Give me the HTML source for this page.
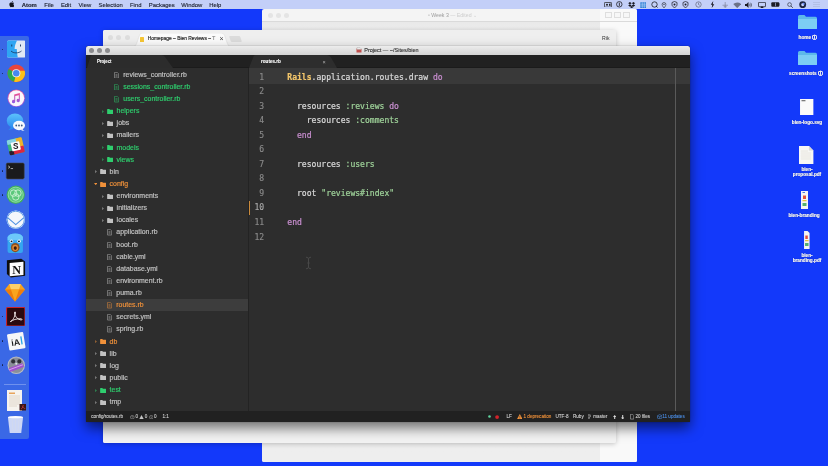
<!DOCTYPE html>
<html lang="en"><head><meta charset="utf-8"><title>Project — ~/Sites/bien</title>
<style>
*{margin:0;padding:0;box-sizing:border-box}
html,body{width:828px;height:466px;overflow:hidden;background:#1339fa}
body{font-family:"Liberation Sans",sans-serif;-webkit-font-smoothing:antialiased}
#desktop{filter:blur(.4px);position:relative;width:828px;height:466px;background:#1339fa;overflow:hidden}
/* menu bar */
#menubar{position:absolute;left:0;top:0;width:828px;height:9.300px;background:#c3cff8;}
#menubar span{-webkit-text-stroke:.12px #1a1e2c;position:absolute;top:.500px;height:9px;line-height:9.200px;font-size:5.900px;color:#1a1e2c;white-space:nowrap}
#menubar span.b{font-weight:bold}
#menubar svg{position:absolute}
/* dock */
#dock{position:absolute;left:0;top:36px;width:29px;height:402.500px;background:#3a68e6;border-radius:0 2px 2px 0}
#dock .d{position:absolute;left:1.500px;width:1.600px;height:1.600px;border-radius:50%;background:#16204a}
#dock svg{position:absolute}
#dock .sep{position:absolute;left:4px;width:22px;top:348px;height:.6px;background:#6f91ee}
/* desktop icons */
.dl{-webkit-text-stroke:.15px #fff;position:absolute;font-size:4.700px;font-weight:bold;color:#fff;white-space:nowrap;text-align:center;line-height:5.400px;text-shadow:0 .3px .8px rgba(0,0,0,.6)}
.di{position:absolute}
/* back window */
#w1{position:absolute;left:262px;top:9px;width:375px;height:453.200px;background:#f4f4f4;border-radius:2px 2px 2px 2px;overflow:hidden}
#w1 .tb{position:absolute;left:0;top:0;width:100%;height:12.500px;border-bottom:.5px solid #dadada}
#w1 .tb i,#w2 .strip i{position:absolute;top:3.500px;width:5px;height:5px;border-radius:50%;background:#e4e4e4}
#w1 .tb b{position:absolute;top:3px;width:7px;height:5.500px;border:.5px solid #dedede;background:#f7f7f7}
#w1 .t1{position:absolute;left:166px;top:3px;font-size:5.200px;color:#cdcdcd;white-space:nowrap}
#w1 .t1 em{font-style:normal;color:#9c9c9c}
#w1 .body{position:absolute;left:0;top:12.500px;width:100%;bottom:0;background:linear-gradient(#e9e9e9,#ededed 12px,#eeeeee)}
#w1 .insp{position:absolute;left:338px;top:0;right:0;bottom:0;background:#f9f9f9}
/* chrome window */
#w2{position:absolute;left:103px;top:30.300px;width:513px;height:412.500px;background:#f3f3f3;border-radius:2px;overflow:hidden;box-shadow:0 1px 5px rgba(0,0,0,.22)}
#w2 .strip{position:absolute;left:0;top:0;width:100%;height:16px;background:#efefef}
#w2 .strip i{top:5px;background:#dedede}
#w2 .tab{position:absolute;left:29.500px;top:2.500px;width:98px;height:13.500px}
#w2 .tab svg{position:absolute;left:0;top:0}
#w2 .tab em{position:absolute;left:7.200px;top:3.800px;width:4.200px;height:5px;background:#f6c634;border-radius:.6px}
#w2 .tab span{position:absolute;left:15.200px;top:3.700px;font-size:4.920px;color:#222;-webkit-text-stroke:.15px #222;white-space:nowrap}
#w2 .tab u{position:absolute;left:87px;top:2px;font-size:7px;color:#444;text-decoration:none}
#w2 .newtab{position:absolute;left:127px;top:6px;width:10.500px;height:6px;background:#dcdcdc;border-radius:1px;transform:skewX(18deg)}
#w2 .user{position:absolute;left:499px;top:4.800px;font-size:5.200px;color:#333}
#w2 .body{position:absolute;left:0;top:16px;width:100%;bottom:0;background:linear-gradient(#f5f5f5,#f3f3f3)}
/* atom */
#atom{position:absolute;left:86px;top:46.300px;width:603.500px;height:376.100px;border-radius:2.500px 2.500px 1px 1px;overflow:hidden;box-shadow:0 6px 13px rgba(0,0,0,.55),0 0 1px rgba(0,0,0,.6);background:#2d2d2d}
#atom .titlebar{position:absolute;left:0;top:0;width:100%;height:9px;background:linear-gradient(#ececec,#d4d4d4)}
#atom .titlebar i{position:absolute;top:1.700px;width:5.200px;height:5.200px;border-radius:50%;background:#8c8c8e}
#atom .title{position:absolute;left:270.300px;top:1.200px;font-size:5.480px;color:#2c2c2c;-webkit-text-stroke:.1px #2c2c2c;white-space:nowrap}
#atom .main{position:absolute;left:0;top:8.700px;width:100%;bottom:0;background:#2d2d2d}
#atom .tabbar{position:absolute;left:0;top:0;width:100%;height:13px;background:#212121;border-bottom:1.800px solid #1b1b1b}
.ptab,.ftab{position:absolute;left:1px;top:0}
.ptxt,.ftxt,.fx{-webkit-text-stroke:.1px #fff;position:absolute;color:#fff;font-weight:bold;font-size:4.900px;top:4.300px;white-space:nowrap;transform-origin:left center;transform:scaleX(.87)}
.ptxt{left:11.300px}
.ftxt{left:174.800px;font-size:4.900px;top:4.300px;transform:scaleX(.94)}
.fx{transform:none;left:236.500px;font-weight:normal;font-size:5.500px;top:3.600px;color:#b0b0b0;-webkit-text-stroke:0}
.tree{position:absolute;left:0;top:0;width:162px;height:100%}
.row{-webkit-text-stroke:.18px currentColor;position:absolute;left:0;width:162px;height:12.120px;font-size:6.950px;line-height:12.120px;white-space:nowrap}
.row.sel{background:#3d3d3d}
.row span{position:absolute;top:0}
.row .ic{position:absolute}
.vsep{position:absolute;left:162px;top:13px;width:.8px;bottom:11px;background:#232323}
.editor{position:absolute;left:163px;top:13px;right:0;bottom:11px;background:#2d2d2d;overflow:hidden}
.editor .hl{position:absolute;left:0;right:0;top:0;height:15.800px;background:#393939}
.editor .guide{position:absolute;left:426px;top:0;width:.9px;bottom:0;background:#5a5a5a}
.editor .curmark{position:absolute;left:0;top:132.800px;width:1px;height:14.500px;background:#c98a3c}
.ln,.cl{position:absolute;font-family:"DejaVu Sans Mono","Liberation Mono",monospace;font-size:8.070px;line-height:14.500px;height:14.500px;white-space:pre}
.ln{left:0;width:15.200px;-webkit-text-stroke:.15px currentColor;text-align:right;color:#8a8a8a;transform:translateY(-13px)}
.ln.cur{color:#a8a8a8}
.cl{left:38.300px;color:#dadada;-webkit-text-stroke:.2px currentColor;transform:translateY(-13px)}
.cl .y{color:#f3c66b;font-weight:bold}
.cl .p{color:#c98fd0}
.cl .g{color:#9fd39a}
.ibeam{position:absolute;left:55.500px;top:188.500px}
/* status */
#status{position:absolute;left:0;bottom:0;width:100%;height:11px;background:#212121}
#status span{-webkit-text-stroke:.1px currentColor;position:absolute;top:0;height:11px;line-height:11px;font-size:4.600px;color:#d0d0d0;white-space:nowrap}
#status svg{position:absolute}
#w2 .tab s{text-decoration:none;color:#c8c8c8}

</style></head>
<body>
<div id="desktop">
<div id="menubar">
<svg style="left:8.800px;top:1.400px" width="5.2" height="6.2" viewBox="0 0 17 20"><path d="M14.200 10.600c0-2.400 2-3.600 2.100-3.700-1.100-1.700-2.900-1.900-3.500-1.900-1.500-.2-2.900.9-3.700.9s-1.900-.9-3.200-.8C4.300 5.100 2.800 6 2 7.500.2 10.600 1.500 15.200 3.200 17.700c.9 1.200 1.900 2.600 3.200 2.500 1.300 0 1.800-.8 3.300-.8s2 .8 3.300.8c1.400 0 2.300-1.200 3.100-2.500.9-1.400 1.300-2.800 1.300-2.900 0 0-2.600-1-2.600-4.200zM11.700 3.200C12.400 2.400 12.800 1.200 12.700 0c-1 0-2.300.7-3 1.500-.7.800-1.200 2-1.100 3.100 1.200.1 2.400-.6 3.100-1.400z" fill="#14161f"/></svg>
<span class="b" style="left:21.800px">Atom</span>
<span style="left:44.300px">File</span>
<span style="left:60.900px">Edit</span>
<span style="left:78.500px">View</span>
<span style="left:98.500px">Selection</span>
<span style="left:130px">Find</span>
<span style="left:148.800px">Packages</span>
<span style="left:181.300px">Window</span>
<span style="left:209.200px">Help</span>
<!-- right status icons -->
<svg style="left:604px;top:1.800px" width="8" height="5.600" viewBox="0 0 16 11"><rect x=".8" y=".8" width="14.400" height="9.400" rx="1.500" fill="none" stroke="#222" stroke-width="1.500"/><circle cx="6" cy="5.500" r="2" fill="#222"/><path d="M10 4l3-1.500v6L10 7z" fill="#222"/></svg>
<svg style="left:616px;top:1.400px" width="6.600" height="6.600" viewBox="0 0 14 14"><circle cx="7" cy="7" r="5.800" fill="none" stroke="#1d1d25" stroke-width="1.700"/><rect x="6.100" y="3.500" width="1.800" height="7" fill="#1d1d25"/></svg>
<svg style="left:628.300px;top:1.500px" width="7.400" height="6.600" viewBox="0 0 16 14"><path d="M4.200 0L8 2.500 4.200 5 .4 2.500zM11.800 0l3.800 2.500L11.800 5 8 2.500zM.4 7.500L4.200 5 8 7.500 4.200 10zM11.800 5l3.800 2.500-3.800 2.500L8 7.500zM4.300 10.800L8 8.400l3.700 2.400L8 13.300z" fill="#1a1a22"/></svg>
<svg style="left:639.500px;top:1.600px" width="6.600" height="6.200" viewBox="0 0 13 12"><rect x=".5" y=".5" width="12" height="11" rx="1" fill="#2f7fd6"/><path d="M.5 4.200h12M.5 7.800h12M4.500 .5v11M8.500 .5v11" stroke="#d7ecff" stroke-width=".9"/></svg>
<svg style="left:650.500px;top:1.300px" width="7" height="7" viewBox="0 0 14 14"><circle cx="7" cy="7" r="5.400" fill="none" stroke="#1d1d25" stroke-width="1.600"/><path d="M10 10l3 3" stroke="#1d1d25" stroke-width="1.800"/></svg>
<svg style="left:661px;top:1.500px" width="6" height="6.600" viewBox="0 0 12 13"><path d="M6 1a3.800 3.800 0 0 1 3.800 3.800C9.800 7.500 6 12 6 12S2.200 7.500 2.200 4.800A3.800 3.800 0 0 1 6 1z" fill="none" stroke="#333842" stroke-width="1.400"/><circle cx="6" cy="4.800" r="1.300" fill="#333842"/></svg>
<svg style="left:670.500px;top:1.300px" width="7" height="7" viewBox="0 0 14 14"><path d="M7 1l5 2v4c0 3-2.200 5-5 6-2.800-1-5-3-5-6V3z" fill="none" stroke="#1d1d25" stroke-width="1.500"/><circle cx="7" cy="7" r="2" fill="#1d1d25"/></svg>
<svg style="left:681.500px;top:1.300px" width="7" height="7" viewBox="0 0 14 14"><path d="M7 1l5 2v4c0 3-2.200 5-5 6-2.800-1-5-3-5-6V3z" fill="none" stroke="#1d1d25" stroke-width="1.500"/><circle cx="7" cy="7" r="2" fill="#1d1d25"/></svg>
<svg style="left:694.500px;top:1.300px" width="7" height="7" viewBox="0 0 14 14"><circle cx="7" cy="7" r="5.400" fill="none" stroke="#5b6072" stroke-width="1.300"/><path d="M7 3.500V7l2.500 1.500" fill="none" stroke="#5b6072" stroke-width="1.300"/></svg>
<svg style="left:709.500px;top:1.200px" width="5" height="7.200" viewBox="0 0 10 14"><path d="M6.500 0L1.500 7.500h3L3.500 14l5-7.800h-3z" fill="#1d1d25"/></svg>
<svg style="left:721.500px;top:1.800px" width="6.400" height="6" viewBox="0 0 13 12"><path d="M6.500 0v12M1 6.500h11M3.500 9.500h6" stroke="#7a8096" stroke-width="1.400" fill="none"/></svg>
<svg style="left:732.500px;top:1.600px" width="8.400" height="6.400" viewBox="0 0 17 13"><path d="M8.500 12.500L.5 4.200a11.500 11.500 0 0 1 16 0z" fill="#6c7288"/></svg>
<svg style="left:744.500px;top:1.700px" width="7" height="6" viewBox="0 0 14 12"><path d="M0 4h3l4-4v12L3 8H0z" fill="#1d1d25"/><path d="M9 3.500a3.500 3.500 0 0 1 0 5M10.800 1.500a6 6 0 0 1 0 9" fill="none" stroke="#1d1d25" stroke-width="1.200"/></svg>
<svg style="left:757.500px;top:1.600px" width="8" height="6.400" viewBox="0 0 16 13"><rect x=".8" y=".8" width="14.400" height="8.800" rx="1" fill="none" stroke="#1d1d25" stroke-width="1.500"/><path d="M8 8l4 4.500H4z" fill="#1d1d25"/></svg>
<svg style="left:770.500px;top:2.200px" width="9.600" height="5" viewBox="0 0 19 10"><rect x=".5" y=".5" width="16" height="9" rx="1.800" fill="#1d1d25"/><rect x="17.300" y="3" width="1.500" height="4" fill="#1d1d25"/><rect x="8" y="1.500" width="1.200" height="7" fill="#c3cff8"/></svg>
<svg style="left:787px;top:1.600px" width="6.400" height="6.400" viewBox="0 0 13 13"><circle cx="5.200" cy="5.200" r="3.800" fill="none" stroke="#3a3f4e" stroke-width="1.500"/><path d="M8 8l4 4" stroke="#3a3f4e" stroke-width="1.700"/></svg>
<svg style="left:799.300px;top:1.100px" width="7.400" height="7.400" viewBox="0 0 15 15"><circle cx="7.500" cy="7.500" r="7" fill="#1e2440"/><circle cx="7.500" cy="7.500" r="3" fill="#c9d4ff"/><circle cx="9.500" cy="5.500" r="2" fill="#6a8cf5"/></svg>
<svg style="left:812.500px;top:2.200px" width="7" height="5" viewBox="0 0 14 10"><path d="M0 1h14M0 5h14M0 9h14" stroke="#aeb9de" stroke-width="1.400"/></svg>
</div>

<div id="dock">
<div class="d" style="top:12.5px"></div><div class="d" style="top:36.8px"></div><div class="d" style="top:134.0px"></div><div class="d" style="top:158.3px"></div><div class="d" style="top:279.8px"></div><div class="d" style="top:304.1px"></div><div class="d" style="top:328.4px"></div>
<!-- finder -->
<svg style="left:6.500px;top:4.3px" width="18.500" height="18" viewBox="0 0 37 36"><rect x="0" y="1" width="37" height="34" rx="3" fill="#dfe9f4"/><path d="M0 4a3 3 0 0 1 3-3h17c-3 6-4.500 11-4.800 17h4.300c.3 6 1 11 2 17H3a3 3 0 0 1-3-3z" fill="#2fa5f3"/><path d="M8 22c5 5 15 5 21 0" fill="none" stroke="#16345c" stroke-width="1.600"/><path d="M9.500 9v4M27 9v4" stroke="#16345c" stroke-width="1.800"/></svg>
<!-- chrome -->
<svg style="left:6.500px;top:28.3px" width="18.500" height="18.500" viewBox="0 0 36 36"><circle cx="18" cy="18" r="17" fill="#e8453c"/><path d="M18 18L3.300 9.500A17 17 0 0 0 14 34.500z" fill="#2ca94f"/><path d="M18 18l-4 16.500A17 17 0 0 0 34.300 13H18z" fill="#fbc116"/><circle cx="18" cy="18" r="8" fill="#f1f1f1"/><circle cx="18" cy="18" r="6.300" fill="#4688f1"/></svg>
<!-- itunes -->
<svg style="left:6.500px;top:52.7px" width="18.500" height="18.500" viewBox="0 0 36 36"><defs><linearGradient id="it" x1="0" y1="0" x2="0" y2="1"><stop offset="0" stop-color="#f2508c"/><stop offset="1" stop-color="#8d5de8"/></linearGradient></defs><circle cx="18" cy="18" r="17" fill="url(#it)"/><circle cx="18" cy="18" r="15.500" fill="#fbf7fb"/><path d="M14 10.500l11-2.500v14.500a3.200 3.200 0 1 1-2-3V12l-7 1.600v10.900a3.200 3.200 0 1 1-2-3z" fill="url(#it)"/></svg>
<!-- messages-ish -->
<svg style="left:6px;top:76.7px" width="19.500" height="19" viewBox="0 0 39 38"><defs><linearGradient id="ms" x1="0" y1="0" x2="0" y2="1"><stop offset="0" stop-color="#5cc2fb"/><stop offset="1" stop-color="#2b8cf0"/></linearGradient></defs><ellipse cx="18" cy="15.500" rx="16.500" ry="14.500" fill="url(#ms)"/><path d="M5 33c3-1 4-3 4.500-6l6 3c-3 3-7 4-10.500 3z" fill="#2b8cf0"/><ellipse cx="26" cy="25" rx="12" ry="9.500" fill="#f6f9fd"/><path d="M33 32c1 2 2.500 3 4.500 3.500-2.500.5-6 0-8-2z" fill="#f6f9fd"/><circle cx="20.500" cy="25" r="1.800" fill="#3d5c80"/><circle cx="26" cy="25" r="1.800" fill="#3d5c80"/><circle cx="31.500" cy="25" r="1.800" fill="#3d5c80"/></svg>
<!-- slack -->
<svg style="left:6px;top:101.2px" width="19.500" height="18.500" viewBox="0 0 38 36"><g transform="rotate(-13 19 18)"><rect x="4" y="3" width="30" height="30" rx="2.500" fill="#3ab57c"/><path d="M4 5.500A2.500 2.500 0 0 1 6.500 3H24v9H4z" fill="#86d3e4"/><path d="M22 3h9.500A2.500 2.500 0 0 1 34 5.500V22H24V12h-2z" fill="#f0b22c"/><path d="M34 20v10.500a2.500 2.500 0 0 1-2.500 2.500H12v-9h12v-4z" fill="#dc2740"/><path d="M4 25h9v8H6.500A2.500 2.500 0 0 1 4 30.500z" fill="#2a1c2c"/><rect x="10.500" y="9.500" width="17" height="17" rx="1.500" fill="#fbfbfb"/></g><text x="19" y="24.300" font-family="Liberation Sans,sans-serif" font-weight="bold" font-size="16" fill="#17141a" text-anchor="middle">S</text></svg>
<!-- terminal -->
<svg style="left:4.7px;top:125.8px" width="20.5" height="18" viewBox="0 0 39 37"><rect x="1" y="2" width="37" height="33" rx="3" fill="#1a1a1c" stroke="#4a4a50" stroke-width="1.200"/><path d="M5 8l3.500 2.500L5 13" fill="none" stroke="#e8e8e8" stroke-width="1.400"/><path d="M10 13.500h5" stroke="#e8e8e8" stroke-width="1.400"/></svg>
<!-- green round -->
<svg style="left:5.500px;top:149.4px" width="19.500" height="19.500" viewBox="0 0 36 36"><circle cx="18" cy="18" r="17" fill="#3fae5f"/><circle cx="18" cy="18" r="14" fill="#5cc87c"/><circle cx="18" cy="18" r="14" fill="none" stroke="#a9e6b8" stroke-width="1.300"/><circle cx="14" cy="15" r="6" fill="none" stroke="#d4f5db" stroke-width="1.500"/><circle cx="22" cy="15" r="6" fill="none" stroke="#d4f5db" stroke-width="1.500"/><circle cx="18" cy="22" r="6" fill="none" stroke="#d4f5db" stroke-width="1.500"/></svg>
<!-- airmail -->
<svg style="left:5.500px;top:173.6px" width="19.500" height="19.500" viewBox="0 0 36 36"><circle cx="18" cy="18" r="17" fill="#f4f7fb"/><circle cx="18" cy="18" r="15.800" fill="none" stroke="#5b9be6" stroke-width="1.800"/><path d="M3.500 14.500L18 27l14.500-12.500" fill="none" stroke="#4a8fe0" stroke-width="1.900"/></svg>
<!-- tweetbot -->
<svg style="left:6px;top:197.4px" width="18.5" height="20.5" viewBox="0 0 36 40"><path d="M3 8c2-5 8-7 15-7s13 2 15 7v27a4 4 0 0 1-4 4H7a4 4 0 0 1-4-4z" fill="#35a6f0"/><path d="M3 8c2-5 8-7 15-7s13 2 15 7v6H3z" fill="#6cc8fa"/><circle cx="10.500" cy="16" r="3.400" fill="#eef6fc"/><circle cx="25.500" cy="16" r="3.400" fill="#eef6fc"/><circle cx="10.800" cy="16.300" r="1.900" fill="#0e1c2c"/><circle cx="25.200" cy="16.300" r="1.900" fill="#0e1c2c"/><ellipse cx="18" cy="28.500" rx="8.500" ry="9" fill="#8a4f22"/><ellipse cx="18" cy="29" rx="5.800" ry="6.300" fill="#e08a35"/><ellipse cx="18" cy="29.500" rx="3" ry="3.500" fill="#3a1a08"/></svg>
<!-- notion -->
<svg style="left:4.500px;top:221.2px" width="22" height="21.500" viewBox="0 0 39 39"><path d="M3 6l26-3 7 5v26l-26 3-7-6z" fill="#0d0d0d"/><path d="M8 11l25-2.500v24L8 35z" fill="#fbfbfb"/><text x="20.500" y="30" font-family="Liberation Serif,serif" font-weight="bold" font-size="22" fill="#0d0d0d" text-anchor="middle">N</text></svg>
<!-- sketch -->
<svg style="left:4.2px;top:246.6px" width="22" height="19.5" viewBox="0 0 39 36"><path d="M9 2h21l8 10-18.500 22L1 12z" fill="#f7a11b"/><path d="M1 12h37L19.500 34z" fill="#ee7d0c"/><path d="M9 2l3 10h15l3-10z" fill="#fdd06a"/><path d="M12 12h15l-7.500 22z" fill="#f9a51e"/></svg>
<!-- acrobat -->
<svg style="left:5.7px;top:270.9px" width="19.5" height="19.5" viewBox="0 0 36 36"><rect x="1" y="1" width="34" height="34" rx="2" fill="#2a0a10" stroke="#c8232c" stroke-width="2"/><path d="M8 27c4-1 8-8 9.500-16 .5-3-2-3-1.800 0 .6 6 5 12 12 13 2.500.3 2.500-2 0-2.200C20 21 12 24 8 27z" fill="none" stroke="#f3e9ea" stroke-width="1.700"/></svg>
<!-- iA writer -->
<svg style="left:5.500px;top:294.7px" width="20.500" height="20.500" viewBox="0 0 40 40"><g transform="rotate(-9 20 20)"><rect x="4" y="4" width="32" height="32" rx="2" fill="#f7f7f7"/><text x="10" y="28" font-family="Liberation Sans,sans-serif" font-weight="bold" font-size="17" fill="#1b1b1b">iA</text><rect x="29" y="12" width="2.600" height="16" fill="#2aa7e8"/></g></svg>
<!-- reel -->
<svg style="left:6.500px;top:320.0px" width="18.500" height="18.500" viewBox="0 0 36 36"><circle cx="18" cy="18" r="17" fill="#b9bcc4"/><circle cx="18" cy="18" r="15" fill="#8b8f9a"/><circle cx="12" cy="10.500" r="4" fill="#2f3036"/><circle cx="24" cy="10.500" r="4" fill="#2f3036"/><circle cx="18" cy="15" r="2" fill="#dfe1e6"/><path d="M3 24L30 14l3 7L6 31z" fill="#a04fd0"/><path d="M4 27L31 17" stroke="#e7c6f5" stroke-width="1.400"/></svg>
<div class="sep"></div>
<!-- document -->
<svg style="left:6.500px;top:353.500px" width="19" height="23" viewBox="0 0 38 46"><rect x="0" y="0" width="30" height="42" fill="#f6f3ee"/><rect x="4" y="5" width="12" height="3" fill="#e7a45c"/><path d="M4 12h22M4 16h22M4 20h22M4 24h22M4 28h22M4 32h16" stroke="#d9cfc0" stroke-width="1.500"/><rect x="25" y="28" width="13" height="13" fill="#3a1418"/><path d="M28 38c2-.5 4-4 4.500-8M31 33c1 2 3 4 5.500 4" stroke="#e34a4a" stroke-width="1.300" fill="none"/></svg>
<!-- trash -->
<svg style="left:7px;top:379px" width="17" height="19.500" viewBox="0 0 37 40"><path d="M2 3h33l-4 35H6z" fill="#e6ebf8" opacity=".85"/><ellipse cx="18.500" cy="3.500" rx="16.500" ry="2.600" fill="#fbfcff"/><path d="M11 8l2 26M18.500 8v26M26 8l-2 26" stroke="#d5daea" stroke-width="1.200" fill="none"/></svg>
</div>

<!-- desktop icons -->
<svg class="di" style="left:798px;top:14.500px" width="19" height="14.500" viewBox="0 0 38 29"><path d="M0 3a3 3 0 0 1 3-3h10l3 3.500h19a3 3 0 0 1 3 3V26a3 3 0 0 1-3 3H3a3 3 0 0 1-3-3z" fill="#5db8ea"/><path d="M0 8h38v18a3 3 0 0 1-3 3H3a3 3 0 0 1-3-3z" fill="#7ccdf4"/></svg>
<div class="dl" style="left:788px;width:40px;top:34.6px">home ⓘ</div>
<svg class="di" style="left:798px;top:50.500px" width="19" height="14.500" viewBox="0 0 38 29"><path d="M0 3a3 3 0 0 1 3-3h10l3 3.500h19a3 3 0 0 1 3 3V26a3 3 0 0 1-3 3H3a3 3 0 0 1-3-3z" fill="#5db8ea"/><path d="M0 8h38v18a3 3 0 0 1-3 3H3a3 3 0 0 1-3-3z" fill="#7ccdf4"/></svg>
<div class="dl" style="left:784px;width:44px;top:70.9px">screenshots ⓘ</div>
<svg class="di" style="left:800.300px;top:98.500px" width="13.400" height="16.800" viewBox="0 0 27 34"><rect width="27" height="34" fill="#fafafa"/><rect x="3" y="2.500" width="8" height="2" fill="#555"/></svg>
<div class="dl" style="left:784px;width:46px;top:119.6px">bien-logo.svg</div>
<svg class="di" style="left:799.300px;top:145.500px" width="14.400" height="18" viewBox="0 0 29 36"><path d="M0 0h20l9 9v27H0z" fill="#f7f7f5"/><path d="M20 0v9h9z" fill="#d8d8d8"/><path d="M4 10h14M4 14h20M4 18h20M4 22h20M4 26h20" stroke="#e4e0d6" stroke-width="1.500"/></svg>
<div class="dl" style="left:784px;width:46px;top:166.9px">bien-<br>proposal.pdf</div>
<svg class="di" style="left:800.500px;top:191px" width="7" height="18" viewBox="0 0 14 36"><rect width="14" height="36" fill="#f4f4f4"/><rect x="3" y="2" width="5" height="2" fill="#4a7ad8"/><rect x="4" y="9" width="6" height="7" fill="#e0523c"/><rect x="3" y="18" width="8" height="2.500" fill="#e8c23a"/><rect x="3" y="24" width="8" height="6" fill="#55b070"/></svg>
<div class="dl" style="left:784px;width:46px;top:213.400px;left:781px">bien-branding</div>
<svg class="di" style="left:804.300px;top:231px" width="5.600" height="18" viewBox="0 0 11 36"><path d="M0 0h7l4 4v32H0z" fill="#f4f4f4"/><rect x="2.500" y="9" width="5" height="7" fill="#e0523c"/><rect x="2" y="18" width="7" height="2.500" fill="#e8c23a"/><rect x="2" y="24" width="7" height="6" fill="#55b070"/></svg>
<div class="dl" style="left:784px;width:46px;top:252.9px">bien-<br>branding.pdf</div>

<!-- back window (Sketch) -->
<div id="w1">
  <div class="body"></div><div class="insp"></div>
  <div class="tb"><i style="left:5.500px"></i><i style="left:13.500px"></i><i style="left:21.500px"></i>
    <span class="t1"><em>▫ Week 3</em> — Edited ⌄</span>
    <b style="left:343px"></b><b style="left:352px"></b><b style="left:361px"></b>
  </div>
</div>
<!-- chrome window -->
<div id="w2">
  <div class="strip"><i style="left:4.500px"></i><i style="left:13px"></i><i style="left:21.500px"></i>
    <div class="tab"><svg width="98" height="13.5" viewBox="0 0 98 13.5"><path d="M0 13.5C3 13.5 3.500 11 5 6.500 6.500 2 7 0 10 0H88C91 0 91.500 2 93 6.500 94.500 11 95 13.500 98 13.500z" fill="#fbfbfb" stroke="#d9d9d9" stroke-width=".5"/></svg><em></em><span>Homepage – Bien Reviews – <s>T</s></span><u>×</u></div>
    <div class="newtab"></div>
    <div class="user">Rik</div>
  </div>
  <div class="body"></div>
</div>
<!-- atom window -->
<div id="atom">
  <div class="titlebar"><i style="left:2.500px"></i><i style="left:10.500px"></i><i style="left:18.500px"></i>
    <span class="title"><svg width="6" height="6" viewBox="0 0 12 12" style="vertical-align:-1px;margin-right:2px"><path d="M1 3h4l1 1h5v7H1z" fill="#c0504d"/><path d="M2 1h6l2 2v2H2z" fill="#e8e8e8" stroke="#999" stroke-width=".6"/></svg>Project — ~/Sites/bien</span>
  </div>
  <div class="main">
    <div class="tabbar"></div>
    <svg class="ptab" width="92" height="13" viewBox="0 0 92 13"><path d="M0 13L3.500 1.500Q4 0 5.500 0H75Q77 0 78.500 2.500L86 13z" fill="#2c2c2c"/></svg>
    <span class="ptxt">Project</span>
    <svg class="ftab" width="92" height="13" viewBox="0 0 92 13" style="left:163px"><path d="M0 13L4.500 1.500Q5 0 6.500 0H78Q80.500 0 82 2.500L88 13z" fill="#2d2d2d"/></svg>
    <span class="ftxt">routes.rb</span><span class="fx">×</span>
    <div class="tree">
<div class="row" style="top:13.90px;color:#c2c2c2"><svg class="ic" style="left:28.3px;top:3px" width="5" height="6.4" viewBox="0 0 10 13" opacity=".65"><path d="M1 .7h5.5L9.3 3.6v8.7H1z" fill="none" stroke="#c2c2c2" stroke-width="1.5"/><path d="M3 5h4M3 7.3h4M3 9.6h4" stroke="#c2c2c2" stroke-width="1.2"/></svg><span style="left:37.3px">reviews_controller.rb</span></div>
<div class="row" style="top:26.02px;color:#2fce6e"><svg class="ic" style="left:28.3px;top:3px" width="5" height="6.4" viewBox="0 0 10 13" opacity=".65"><path d="M1 .7h5.5L9.3 3.6v8.7H1z" fill="none" stroke="#2fce6e" stroke-width="1.5"/><path d="M3 5h4M3 7.3h4M3 9.6h4" stroke="#2fce6e" stroke-width="1.2"/></svg><span style="left:37.3px">sessions_controller.rb</span></div>
<div class="row" style="top:38.14px;color:#2fce6e"><svg class="ic" style="left:28.3px;top:3px" width="5" height="6.4" viewBox="0 0 10 13" opacity=".65"><path d="M1 .7h5.5L9.3 3.6v8.7H1z" fill="none" stroke="#2fce6e" stroke-width="1.5"/><path d="M3 5h4M3 7.3h4M3 9.6h4" stroke="#2fce6e" stroke-width="1.2"/></svg><span style="left:37.3px">users_controller.rb</span></div>
<div class="row" style="top:50.26px;color:#2fce6e"><svg class="ic" style="left:15.8px;top:4.6px" width="2" height="3.2" viewBox="0 0 5 8"><path d="M0 0v8L5 4z" fill="#2fce6e" opacity=".5"/></svg><svg class="ic" style="left:21.3px;top:3.6px" width="6.2" height="5" viewBox="0 0 13 11"><path d="M0 1.2C0 .5.5 0 1.2 0h3.6l1.3 1.6h5.7c.7 0 1.2.5 1.2 1.2v7c0 .7-.5 1.2-1.2 1.2H1.200C.5 11 0 10.500 0 9.800z" fill="#2fce6e"/></svg><span style="left:30.6px">helpers</span></div>
<div class="row" style="top:62.38px;color:#c2c2c2"><svg class="ic" style="left:15.8px;top:4.6px" width="2" height="3.2" viewBox="0 0 5 8"><path d="M0 0v8L5 4z" fill="#c2c2c2" opacity=".5"/></svg><svg class="ic" style="left:21.3px;top:3.6px" width="6.2" height="5" viewBox="0 0 13 11"><path d="M0 1.2C0 .5.5 0 1.2 0h3.6l1.3 1.6h5.7c.7 0 1.2.5 1.2 1.2v7c0 .7-.5 1.2-1.2 1.2H1.200C.5 11 0 10.500 0 9.800z" fill="#c2c2c2"/></svg><span style="left:30.6px">jobs</span></div>
<div class="row" style="top:74.50px;color:#c2c2c2"><svg class="ic" style="left:15.8px;top:4.6px" width="2" height="3.2" viewBox="0 0 5 8"><path d="M0 0v8L5 4z" fill="#c2c2c2" opacity=".5"/></svg><svg class="ic" style="left:21.3px;top:3.6px" width="6.2" height="5" viewBox="0 0 13 11"><path d="M0 1.2C0 .5.5 0 1.2 0h3.6l1.3 1.6h5.7c.7 0 1.2.5 1.2 1.2v7c0 .7-.5 1.2-1.2 1.2H1.200C.5 11 0 10.500 0 9.800z" fill="#c2c2c2"/></svg><span style="left:30.6px">mailers</span></div>
<div class="row" style="top:86.62px;color:#2fce6e"><svg class="ic" style="left:15.8px;top:4.6px" width="2" height="3.2" viewBox="0 0 5 8"><path d="M0 0v8L5 4z" fill="#2fce6e" opacity=".5"/></svg><svg class="ic" style="left:21.3px;top:3.6px" width="6.2" height="5" viewBox="0 0 13 11"><path d="M0 1.2C0 .5.5 0 1.2 0h3.6l1.3 1.6h5.7c.7 0 1.2.5 1.2 1.2v7c0 .7-.5 1.2-1.2 1.2H1.200C.5 11 0 10.500 0 9.800z" fill="#2fce6e"/></svg><span style="left:30.6px">models</span></div>
<div class="row" style="top:98.74px;color:#2fce6e"><svg class="ic" style="left:15.8px;top:4.6px" width="2" height="3.2" viewBox="0 0 5 8"><path d="M0 0v8L5 4z" fill="#2fce6e" opacity=".5"/></svg><svg class="ic" style="left:21.3px;top:3.6px" width="6.2" height="5" viewBox="0 0 13 11"><path d="M0 1.2C0 .5.5 0 1.2 0h3.6l1.3 1.6h5.7c.7 0 1.2.5 1.2 1.2v7c0 .7-.5 1.2-1.2 1.2H1.200C.5 11 0 10.500 0 9.800z" fill="#2fce6e"/></svg><span style="left:30.6px">views</span></div>
<div class="row" style="top:110.86px;color:#c2c2c2"><svg class="ic" style="left:8.8px;top:4.6px" width="2" height="3.2" viewBox="0 0 5 8"><path d="M0 0v8L5 4z" fill="#c2c2c2" opacity=".5"/></svg><svg class="ic" style="left:14.3px;top:3.6px" width="6.2" height="5" viewBox="0 0 13 11"><path d="M0 1.2C0 .5.5 0 1.2 0h3.6l1.3 1.6h5.7c.7 0 1.2.5 1.2 1.2v7c0 .7-.5 1.2-1.2 1.2H1.200C.5 11 0 10.500 0 9.800z" fill="#c2c2c2"/></svg><span style="left:23.6px">bin</span></div>
<div class="row" style="top:122.98px;color:#f0913a"><svg class="ic" style="left:7.7px;top:5.2px" width="3.4" height="2.2" viewBox="0 0 8 5"><path d="M0 0h8L4 5z" fill="#f0913a"/></svg><svg class="ic" style="left:14.3px;top:3.6px" width="6.2" height="5" viewBox="0 0 13 11"><path d="M0 1.2C0 .5.5 0 1.2 0h3.6l1.3 1.6h5.7c.7 0 1.2.5 1.2 1.2v7c0 .7-.5 1.2-1.2 1.2H1.200C.5 11 0 10.500 0 9.800z" fill="#f0913a"/></svg><span style="left:23.6px">config</span></div>
<div class="row" style="top:135.10px;color:#c2c2c2"><svg class="ic" style="left:15.8px;top:4.6px" width="2" height="3.2" viewBox="0 0 5 8"><path d="M0 0v8L5 4z" fill="#c2c2c2" opacity=".5"/></svg><svg class="ic" style="left:21.3px;top:3.6px" width="6.2" height="5" viewBox="0 0 13 11"><path d="M0 1.2C0 .5.5 0 1.2 0h3.6l1.3 1.6h5.7c.7 0 1.2.5 1.2 1.2v7c0 .7-.5 1.2-1.2 1.2H1.200C.5 11 0 10.500 0 9.800z" fill="#c2c2c2"/></svg><span style="left:30.6px">environments</span></div>
<div class="row" style="top:147.22px;color:#c2c2c2"><svg class="ic" style="left:15.8px;top:4.6px" width="2" height="3.2" viewBox="0 0 5 8"><path d="M0 0v8L5 4z" fill="#c2c2c2" opacity=".5"/></svg><svg class="ic" style="left:21.3px;top:3.6px" width="6.2" height="5" viewBox="0 0 13 11"><path d="M0 1.2C0 .5.5 0 1.2 0h3.6l1.3 1.6h5.7c.7 0 1.2.5 1.2 1.2v7c0 .7-.5 1.2-1.2 1.2H1.200C.5 11 0 10.500 0 9.800z" fill="#c2c2c2"/></svg><span style="left:30.6px">initializers</span></div>
<div class="row" style="top:159.34px;color:#c2c2c2"><svg class="ic" style="left:15.8px;top:4.6px" width="2" height="3.2" viewBox="0 0 5 8"><path d="M0 0v8L5 4z" fill="#c2c2c2" opacity=".5"/></svg><svg class="ic" style="left:21.3px;top:3.6px" width="6.2" height="5" viewBox="0 0 13 11"><path d="M0 1.2C0 .5.5 0 1.2 0h3.6l1.3 1.6h5.7c.7 0 1.2.5 1.2 1.2v7c0 .7-.5 1.2-1.2 1.2H1.200C.5 11 0 10.500 0 9.800z" fill="#c2c2c2"/></svg><span style="left:30.6px">locales</span></div>
<div class="row" style="top:171.46px;color:#c2c2c2"><svg class="ic" style="left:21.3px;top:3px" width="5" height="6.4" viewBox="0 0 10 13" opacity=".65"><path d="M1 .7h5.5L9.3 3.6v8.7H1z" fill="none" stroke="#c2c2c2" stroke-width="1.5"/><path d="M3 5h4M3 7.3h4M3 9.6h4" stroke="#c2c2c2" stroke-width="1.2"/></svg><span style="left:30.3px">application.rb</span></div>
<div class="row" style="top:183.58px;color:#c2c2c2"><svg class="ic" style="left:21.3px;top:3px" width="5" height="6.4" viewBox="0 0 10 13" opacity=".65"><path d="M1 .7h5.5L9.3 3.6v8.7H1z" fill="none" stroke="#c2c2c2" stroke-width="1.5"/><path d="M3 5h4M3 7.3h4M3 9.6h4" stroke="#c2c2c2" stroke-width="1.2"/></svg><span style="left:30.3px">boot.rb</span></div>
<div class="row" style="top:195.70px;color:#c2c2c2"><svg class="ic" style="left:21.3px;top:3px" width="5" height="6.4" viewBox="0 0 10 13" opacity=".65"><path d="M1 .7h5.5L9.3 3.6v8.7H1z" fill="none" stroke="#c2c2c2" stroke-width="1.5"/><path d="M3 5h4M3 7.3h4M3 9.6h4" stroke="#c2c2c2" stroke-width="1.2"/></svg><span style="left:30.3px">cable.yml</span></div>
<div class="row" style="top:207.82px;color:#c2c2c2"><svg class="ic" style="left:21.3px;top:3px" width="5" height="6.4" viewBox="0 0 10 13" opacity=".65"><path d="M1 .7h5.5L9.3 3.6v8.7H1z" fill="none" stroke="#c2c2c2" stroke-width="1.5"/><path d="M3 5h4M3 7.3h4M3 9.6h4" stroke="#c2c2c2" stroke-width="1.2"/></svg><span style="left:30.3px">database.yml</span></div>
<div class="row" style="top:219.94px;color:#c2c2c2"><svg class="ic" style="left:21.3px;top:3px" width="5" height="6.4" viewBox="0 0 10 13" opacity=".65"><path d="M1 .7h5.5L9.3 3.6v8.7H1z" fill="none" stroke="#c2c2c2" stroke-width="1.5"/><path d="M3 5h4M3 7.3h4M3 9.6h4" stroke="#c2c2c2" stroke-width="1.2"/></svg><span style="left:30.3px">environment.rb</span></div>
<div class="row" style="top:232.06px;color:#c2c2c2"><svg class="ic" style="left:21.3px;top:3px" width="5" height="6.4" viewBox="0 0 10 13" opacity=".65"><path d="M1 .7h5.5L9.3 3.6v8.7H1z" fill="none" stroke="#c2c2c2" stroke-width="1.5"/><path d="M3 5h4M3 7.3h4M3 9.6h4" stroke="#c2c2c2" stroke-width="1.2"/></svg><span style="left:30.3px">puma.rb</span></div>
<div class="row sel" style="top:244.18px;color:#f0913a"><svg class="ic" style="left:21.3px;top:3px" width="5" height="6.4" viewBox="0 0 10 13" opacity=".65"><path d="M1 .7h5.5L9.3 3.6v8.7H1z" fill="none" stroke="#f0913a" stroke-width="1.5"/><path d="M3 5h4M3 7.3h4M3 9.6h4" stroke="#f0913a" stroke-width="1.2"/></svg><span style="left:30.3px">routes.rb</span></div>
<div class="row" style="top:256.30px;color:#c2c2c2"><svg class="ic" style="left:21.3px;top:3px" width="5" height="6.4" viewBox="0 0 10 13" opacity=".65"><path d="M1 .7h5.5L9.3 3.6v8.7H1z" fill="none" stroke="#c2c2c2" stroke-width="1.5"/><path d="M3 5h4M3 7.3h4M3 9.6h4" stroke="#c2c2c2" stroke-width="1.2"/></svg><span style="left:30.3px">secrets.yml</span></div>
<div class="row" style="top:268.42px;color:#c2c2c2"><svg class="ic" style="left:21.3px;top:3px" width="5" height="6.4" viewBox="0 0 10 13" opacity=".65"><path d="M1 .7h5.5L9.3 3.6v8.7H1z" fill="none" stroke="#c2c2c2" stroke-width="1.5"/><path d="M3 5h4M3 7.3h4M3 9.6h4" stroke="#c2c2c2" stroke-width="1.2"/></svg><span style="left:30.3px">spring.rb</span></div>
<div class="row" style="top:280.54px;color:#f0913a"><svg class="ic" style="left:8.8px;top:4.6px" width="2" height="3.2" viewBox="0 0 5 8"><path d="M0 0v8L5 4z" fill="#f0913a" opacity=".5"/></svg><svg class="ic" style="left:14.3px;top:3.6px" width="6.2" height="5" viewBox="0 0 13 11"><path d="M0 1.2C0 .5.5 0 1.2 0h3.6l1.3 1.6h5.7c.7 0 1.2.5 1.2 1.2v7c0 .7-.5 1.2-1.2 1.2H1.200C.5 11 0 10.500 0 9.800z" fill="#f0913a"/></svg><span style="left:23.6px">db</span></div>
<div class="row" style="top:292.66px;color:#c2c2c2"><svg class="ic" style="left:8.8px;top:4.6px" width="2" height="3.2" viewBox="0 0 5 8"><path d="M0 0v8L5 4z" fill="#c2c2c2" opacity=".5"/></svg><svg class="ic" style="left:14.3px;top:3.6px" width="6.2" height="5" viewBox="0 0 13 11"><path d="M0 1.2C0 .5.5 0 1.2 0h3.6l1.3 1.6h5.7c.7 0 1.2.5 1.2 1.2v7c0 .7-.5 1.2-1.2 1.2H1.200C.5 11 0 10.500 0 9.800z" fill="#c2c2c2"/></svg><span style="left:23.6px">lib</span></div>
<div class="row" style="top:304.78px;color:#c2c2c2"><svg class="ic" style="left:8.8px;top:4.6px" width="2" height="3.2" viewBox="0 0 5 8"><path d="M0 0v8L5 4z" fill="#c2c2c2" opacity=".5"/></svg><svg class="ic" style="left:14.3px;top:3.6px" width="6.2" height="5" viewBox="0 0 13 11"><path d="M0 1.2C0 .5.5 0 1.2 0h3.6l1.3 1.6h5.7c.7 0 1.2.5 1.2 1.2v7c0 .7-.5 1.2-1.2 1.2H1.200C.5 11 0 10.500 0 9.800z" fill="#c2c2c2"/></svg><span style="left:23.6px">log</span></div>
<div class="row" style="top:316.90px;color:#c2c2c2"><svg class="ic" style="left:8.8px;top:4.6px" width="2" height="3.2" viewBox="0 0 5 8"><path d="M0 0v8L5 4z" fill="#c2c2c2" opacity=".5"/></svg><svg class="ic" style="left:14.3px;top:3.6px" width="6.2" height="5" viewBox="0 0 13 11"><path d="M0 1.2C0 .5.5 0 1.2 0h3.6l1.3 1.6h5.7c.7 0 1.2.5 1.2 1.2v7c0 .7-.5 1.2-1.2 1.2H1.200C.5 11 0 10.500 0 9.800z" fill="#c2c2c2"/></svg><span style="left:23.6px">public</span></div>
<div class="row" style="top:329.02px;color:#2fce6e"><svg class="ic" style="left:8.8px;top:4.6px" width="2" height="3.2" viewBox="0 0 5 8"><path d="M0 0v8L5 4z" fill="#2fce6e" opacity=".5"/></svg><svg class="ic" style="left:14.3px;top:3.6px" width="6.2" height="5" viewBox="0 0 13 11"><path d="M0 1.2C0 .5.5 0 1.2 0h3.6l1.3 1.6h5.7c.7 0 1.2.5 1.2 1.2v7c0 .7-.5 1.2-1.2 1.2H1.200C.5 11 0 10.500 0 9.800z" fill="#2fce6e"/></svg><span style="left:23.6px">test</span></div>
<div class="row" style="top:341.14px;color:#c2c2c2"><svg class="ic" style="left:8.8px;top:4.6px" width="2" height="3.2" viewBox="0 0 5 8"><path d="M0 0v8L5 4z" fill="#c2c2c2" opacity=".5"/></svg><svg class="ic" style="left:14.3px;top:3.6px" width="6.2" height="5" viewBox="0 0 13 11"><path d="M0 1.2C0 .5.5 0 1.2 0h3.6l1.3 1.6h5.7c.7 0 1.2.5 1.2 1.2v7c0 .7-.5 1.2-1.2 1.2H1.200C.5 11 0 10.500 0 9.800z" fill="#c2c2c2"/></svg><span style="left:23.6px">tmp</span></div>
    </div>
    <div class="vsep"></div>
    <div class="editor">
      <div class="hl"></div>
      <div class="curmark"></div>
      <div class="guide"></div>
<div class="ln" style="top:15.80px">1</div><pre class="cl" style="top:15.80px"><span class="y">Rails</span>.application.routes.draw <span class="p">do</span></pre>
<div class="ln" style="top:30.32px">2</div><pre class="cl" style="top:30.32px"></pre>
<div class="ln" style="top:44.84px">3</div><pre class="cl" style="top:44.84px">  resources <span class="g">:reviews</span> <span class="p">do</span></pre>
<div class="ln" style="top:59.36px">4</div><pre class="cl" style="top:59.36px">    resources <span class="g">:comments</span></pre>
<div class="ln" style="top:73.88px">5</div><pre class="cl" style="top:73.88px">  <span class="p">end</span></pre>
<div class="ln" style="top:88.40px">6</div><pre class="cl" style="top:88.40px"></pre>
<div class="ln" style="top:102.92px">7</div><pre class="cl" style="top:102.92px">  resources <span class="g">:users</span></pre>
<div class="ln" style="top:117.44px">8</div><pre class="cl" style="top:117.44px"></pre>
<div class="ln" style="top:131.96px">9</div><pre class="cl" style="top:131.96px">  root <span class="g">"reviews#index"</span></pre>
<div class="ln cur" style="top:146.48px">10</div><pre class="cl" style="top:146.48px"></pre>
<div class="ln" style="top:161.00px">11</div><pre class="cl" style="top:161.00px"><span class="p">end</span></pre>
<div class="ln" style="top:175.52px">12</div><pre class="cl" style="top:175.52px"></pre>
      <svg class="ibeam" width="7" height="14" viewBox="0 0 7 14"><path d="M1 1.200Q3.500 1.200 3.500 3V11Q3.500 12.800 1 12.800M6 1.200Q3.500 1.200 3.500 3M3.500 11Q3.500 12.800 6 12.800M2.300 7h2.400" fill="none" stroke="#484848" stroke-width="1"/></svg>
    </div>
    <div id="status">
      <span style="left:5.300px">config/routes.rb</span>
      <svg style="left:44px;top:3.200px" width="4.600" height="4.600" viewBox="0 0 10 10"><circle cx="5" cy="5" r="4" fill="none" stroke="#aaa" stroke-width="1.200"/><path d="M5 2.500v3.200M5 6.800v1" stroke="#aaa" stroke-width="1.200"/></svg>
      <span style="left:49.500px">0</span>
      <svg style="left:53px;top:3.200px" width="5" height="4.600" viewBox="0 0 11 10"><path d="M5.500 0L11 10H0z" fill="#c4c4c4"/></svg>
      <span style="left:58.800px">0</span>
      <svg style="left:62.500px;top:3.200px" width="4.600" height="4.600" viewBox="0 0 10 10"><circle cx="5" cy="5" r="4" fill="none" stroke="#aaa" stroke-width="1.200"/><path d="M5 2.500v1M5 4.500v3.200" stroke="#aaa" stroke-width="1.200"/></svg>
      <span style="left:68px">0</span>
      <span style="left:76.500px">1:1</span>
      <svg style="left:401.500px;top:4px" width="3" height="3" viewBox="0 0 6 6"><circle cx="3" cy="3" r="2.600" fill="#5fd6a0"/></svg>
      <svg style="left:409px;top:3.500px" width="4.200" height="4.200" viewBox="0 0 8 8"><circle cx="4" cy="4" r="3.600" fill="#d2232a"/></svg>
      <span style="left:420.500px">LF</span>
      <svg style="left:430.500px;top:2.800px" width="5.600" height="5.200" viewBox="0 0 11 10"><path d="M5.500 0L11 10H0z" fill="#f0913a"/><path d="M5.500 3.500v3.500M5.500 8v1" stroke="#2a2a2a" stroke-width="1.100"/></svg>
      <span style="left:437.500px;color:#f0913a">1 deprecation</span>
      <span style="left:469.500px">UTF-8</span>
      <span style="left:487px">Ruby</span>
      <svg style="left:501.500px;top:3px" width="3.600" height="5" viewBox="0 0 7 10"><circle cx="1.800" cy="1.800" r="1.200" fill="none" stroke="#c4c4c4"/><circle cx="1.800" cy="8.200" r="1.200" fill="none" stroke="#c4c4c4"/><circle cx="5.500" cy="3" r="1.200" fill="none" stroke="#c4c4c4"/><path d="M1.800 3v4M5.500 4.200c0 2-3.700 1.500-3.700 3" fill="none" stroke="#c4c4c4"/></svg>
      <span style="left:507.300px">master</span>
      <svg style="left:526.500px;top:3.200px" width="3.400" height="4.600" viewBox="0 0 7 9"><path d="M3.500 0L7 4H4.600v5H2.400V4H0z" fill="#d8d8d8"/></svg>
      <svg style="left:534.500px;top:3.200px" width="3.400" height="4.600" viewBox="0 0 7 9"><path d="M3.500 9L7 5H4.600V0H2.400v5H0z" fill="#d8d8d8"/></svg>
      <svg style="left:543.500px;top:2.800px" width="4.200" height="5.400" viewBox="0 0 8 11"><path d="M.6.600h4.400L7.400 3v7.400H.6z" fill="none" stroke="#c4c4c4" stroke-width="1.100"/></svg>
      <span style="left:549.500px">20 files</span>
      <svg style="left:570.500px;top:3px" width="5.400" height="5" viewBox="0 0 11 10"><path d="M1 3.500L5.500 1 10 3.500v5L5.500 10 1 8.500zM1 3.500L5.500 5.500 10 3.500M5.500 5.500V10" fill="none" stroke="#4a8be0" stroke-width="1.100"/></svg>
      <span style="left:576.300px;color:#4a8be0">11 updates</span>
    </div>

  </div>
</div>
</div>
</body></html>
